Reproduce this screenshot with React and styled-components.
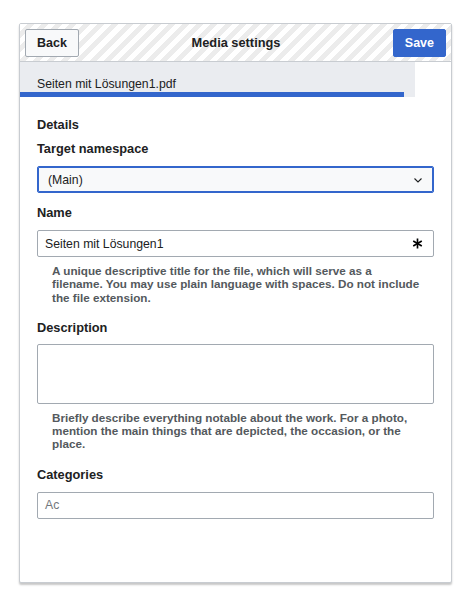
import React from 'react';
import styled, { createGlobalStyle } from 'styled-components';

const GlobalStyle = createGlobalStyle`
  body {
    margin: 0;
    background: #fff;
    font-family: 'Liberation Sans', Arial, sans-serif;
    color: #202122;
  }
`;

const Page = styled.div`
  padding: 23px 0 0 19px;
  height: 599px;
  box-sizing: border-box;
`;

const Dialog = styled.div`
  width: 433px;
  height: 560px;
  box-sizing: border-box;
  border: 1px solid #c8ccd1;
  border-radius: 2px;
  background: #fff;
  box-shadow: 0 2px 2px rgba(0, 0, 0, 0.22);
  display: flex;
  flex-direction: column;
  overflow: hidden;
`;

const Header = styled.div`
  height: 38px;
  box-sizing: border-box;
  border-bottom: 1px solid #c8ccd1;
  display: grid;
  grid-template-columns: 1fr auto 1fr;
  align-items: start;
  padding: 5px 5px 0 5px;
  background-image: repeating-linear-gradient(
    135deg,
    #fff 0 5px,
    #ececec 5px 10px
  );
`;

const Button = styled.button`
  height: 28px;
  padding: 0 11px;
  border-radius: 2px;
  font-family: inherit;
  font-size: 12.5px;
  font-weight: bold;
  cursor: pointer;
  justify-self: ${p => (p.$primary ? 'end' : 'start')};
  border: 1px solid ${p => (p.$primary ? '#36c' : '#a2a9b1')};
  background: ${p => (p.$primary ? '#36c' : '#f8f9fa')};
  color: ${p => (p.$primary ? '#fff' : '#202122')};
`;

const Title = styled.div`
  font-size: 12.8px;
  font-weight: bold;
  line-height: 28px;
  padding-left: 1px;
`;

const Upload = styled.div`
  width: 395px;
  background: #eaecf0;
`;

const FileName = styled.div`
  padding: 15px 0 0 17px;
  font-size: 12.25px;
  line-height: 15px;
`;

const Progress = styled.div`
  width: 384px;
  height: 5px;
  background: #36c;
`;

const Form = styled.div`
  padding: 18px 17px 0 17px;
  display: flex;
  flex-direction: column;
`;

const Heading = styled.div`
  font-size: 12.8px;
  font-weight: bold;
  line-height: 20px;
  margin-top: ${p => p.$gap || 0}px;
`;

const Field = styled.div`
  margin-top: ${p => p.$gap || 7}px;
  height: ${p => p.$h || 27}px;
  box-sizing: border-box;
  border: 1px solid ${p => (p.$focus ? '#36c' : '#a2a9b1')};
  box-shadow: ${p => (p.$focus ? 'inset 0 0 0 1px #36c' : 'none')};
  border-radius: 2px;
  background: ${p => (p.$focus ? '#f8f9fa' : '#fff')};
  display: flex;
  align-items: center;
  padding: 0 10px 0 ${p => (p.$focus ? 10 : 7)}px;
  font-size: 12.25px;
  color: ${p => (p.$placeholder ? '#72777d' : '#202122')};
`;

const FieldText = styled.span`
  flex: 1;
`;

const Help = styled.div`
  margin-top: 7px;
  padding: 0 14px 0 15px;
  font-size: 11.7px;
  font-weight: bold;
  line-height: 13.3px;
  color: #54595d;
`;

const Chevron = () => (
  <svg width="10" height="10" viewBox="0 0 20 20">
    <path d="M3 7l7 7 7-7" fill="none" stroke="#202122" strokeWidth="2.2" />
  </svg>
);

const Asterisk = () => (
  <svg width="11" height="11" viewBox="0 0 20 20">
    <g stroke="#000" strokeWidth="3" strokeLinecap="butt">
      <line x1="10" y1="1" x2="10" y2="19" />
      <line x1="2.2" y1="5.5" x2="17.8" y2="14.5" />
      <line x1="2.2" y1="14.5" x2="17.8" y2="5.5" />
    </g>
  </svg>
);

export default function App() {
  return (
    <Page>
      <GlobalStyle />
      <Dialog>
        <Header>
          <Button>Back</Button>
          <Title>Media settings</Title>
          <Button $primary>Save</Button>
        </Header>
        <Upload>
          <FileName>Seiten mit Lösungen1.pdf</FileName>
          <Progress />
        </Upload>
        <Form>
          <Heading>Details</Heading>
          <Heading $gap={4}>Target namespace</Heading>
          <Field $focus $gap={7}>
            <FieldText>(Main)</FieldText>
            <Chevron />
          </Field>
          <Heading $gap={10}>Name</Heading>
          <Field $gap={7}>
            <FieldText>Seiten mit Lösungen1</FieldText>
            <Asterisk />
          </Field>
          <Help>
            A unique descriptive title for the file, which will serve as a filename. You may use
            plain language with spaces. Do not include the file extension.
          </Help>
          <Heading $gap={14}>Description</Heading>
          <Field $gap={6} $h={60} />
          <Help>
            Briefly describe everything notable about the work. For a photo, mention the main
            things that are depicted, the occasion, or the place.
          </Help>
          <Heading $gap={14}>Categories</Heading>
          <Field $gap={7} $placeholder>
            <FieldText>Ac</FieldText>
          </Field>
        </Form>
      </Dialog>
    </Page>
  );
}
